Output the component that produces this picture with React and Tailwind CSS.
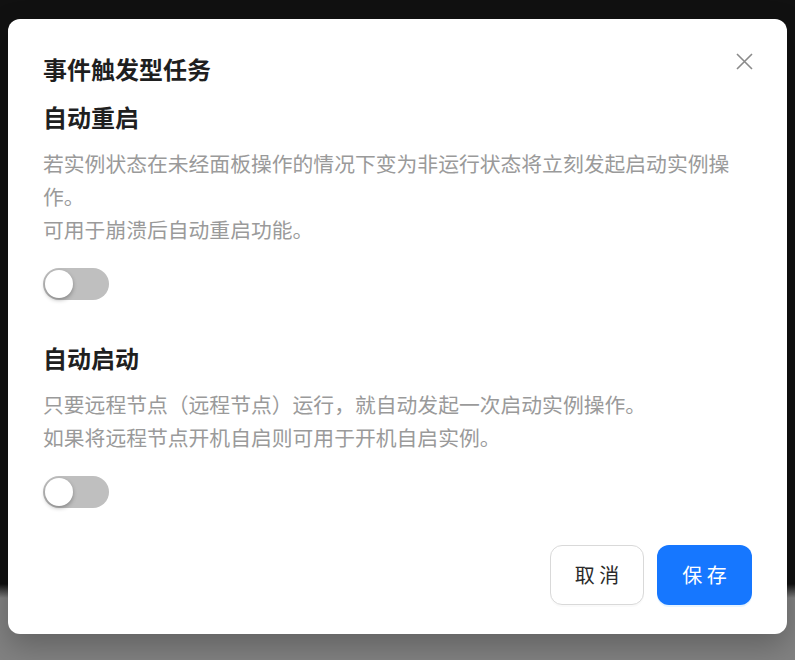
import React, { useState } from "react";

const font = { fontFamily: '"Noto Sans CJK SC", "Noto Sans", sans-serif' };

const Toggle = ({ checked, onChange }) => (
  <button
    type="button"
    onClick={() => onChange(!checked)}
    className={`relative flex h-[32px] w-[66px] shrink-0 items-center rounded-full px-[2px] transition-colors ${
      checked ? "justify-end bg-[#1677ff]" : "justify-start bg-[#bfbfbf]"
    }`}
  >
    <span className="block h-[28px] w-[28px] rounded-full bg-white shadow-[0_2px_4px_rgba(0,0,0,0.3)]" />
  </button>
);

const Section = ({ title, lines, checked, onChange, first }) => (
  <div className={first ? "mt-4" : "mt-[42px]"}>
    <h3 className="text-[24px] font-bold leading-[32px] text-[#1f1f1f]">{title}</h3>
    <div className="mt-[14px] text-[20.8px] leading-[33px] text-[#9a9a9a]">
      {lines.map((l) => (
        <p key={l}>{l}</p>
      ))}
    </div>
    <div className="mt-[22px]">
      <Toggle checked={checked} onChange={onChange} />
    </div>
  </div>
);

export default function App() {
  const [restart, setRestart] = useState(false);
  const [autoStart, setAutoStart] = useState(false);

  return (
    <div
      className="h-[660px] w-full overflow-hidden bg-[linear-gradient(to_bottom,#111111_584px,#828282_598px)] px-[8px] pt-[19px]"
      style={font}
    >
      <div className="relative rounded-[12px] bg-white px-[35px] pb-[29px] pt-[34px] shadow-[0_12px_30px_rgba(0,0,0,0.25)]">
        {/* close */}
        <button className="absolute right-[34px] top-[34px] text-[#8a8a8a]" aria-label="close">
          <svg width="17" height="17" viewBox="0 0 17 17" fill="none" stroke="currentColor" strokeWidth="1.6">
            <path d="M1 1L16 16M16 1L1 16" />
          </svg>
        </button>

        <h2 className="text-[24px] font-bold leading-[32px] text-[#1f1f1f]">事件触发型任务</h2>

        <Section
          first
          title="自动重启"
          lines={[
            "若实例状态在未经面板操作的情况下变为非运行状态将立刻发起启动实例操作。",
            "可用于崩溃后自动重启功能。",
          ]}
          checked={restart}
          onChange={setRestart}
        />

        <Section
          title="自动启动"
          lines={[
            "只要远程节点（远程节点）运行，就自动发起一次启动实例操作。",
            "如果将远程节点开机自启则可用于开机自启实例。",
          ]}
          checked={autoStart}
          onChange={setAutoStart}
        />

        {/* footer */}
        <div className="mt-[37px] flex justify-end gap-[13px]">
          <button className="h-[60px] w-[94px] rounded-[12px] border border-[#d9d9d9] bg-white text-[20px] text-[#2a2a2a] shadow-[0_2px_0_rgba(0,0,0,0.02)]">
            取 消
          </button>
          <button className="h-[60px] w-[95px] rounded-[12px] bg-[#1677ff] text-[20px] text-white shadow-[0_2px_0_rgba(5,145,255,0.1)]">
            保 存
          </button>
        </div>
      </div>
    </div>
  );
}
